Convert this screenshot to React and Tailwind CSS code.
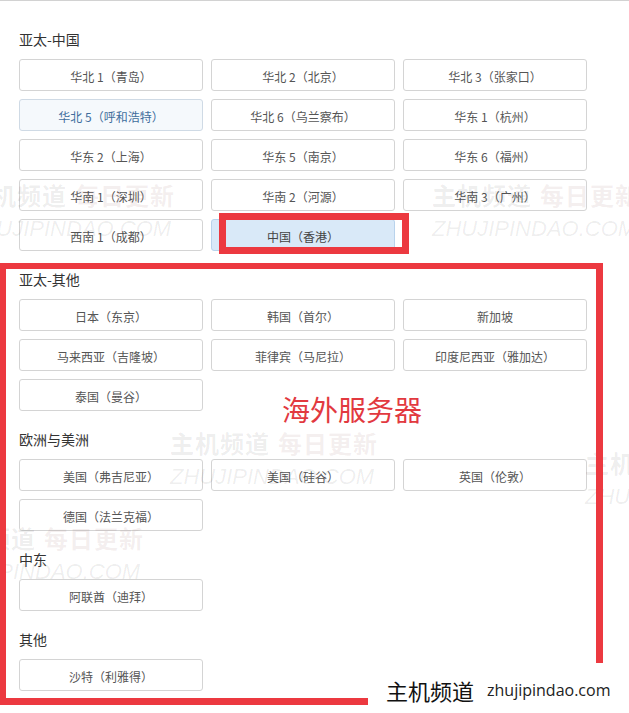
const sections = [
  {
    title: "亚太-中国",
    items: [
      "华北 1（青岛）",
      "华北 2（北京）",
      "华北 3（张家口）",
      "华北 5（呼和浩特）",
      "华北 6（乌兰察布）",
      "华东 1（杭州）",
      "华东 2（上海）",
      "华东 5（南京）",
      "华东 6（福州）",
      "华南 1（深圳）",
      "华南 2（河源）",
      "华南 3（广州）",
      "西南 1（成都）",
      "中国（香港）",
    ],
  },
  {
    title: "亚太-其他",
    items: ["日本（东京）", "韩国（首尔）", "新加坡", "马来西亚（吉隆坡）", "菲律宾（马尼拉）", "印度尼西亚（雅加达）", "泰国（曼谷）"],
  },
  { title: "欧洲与美洲", items: ["美国（弗吉尼亚）", "美国（硅谷）", "英国（伦敦）", "德国（法兰克福）"] },
  { title: "中东", items: ["阿联酋（迪拜）"] },
  { title: "其他", items: ["沙特（利雅得）"] },
];

const hovered = "华北 5（呼和浩特）";
const selected = "中国（香港）";

function RegionButton({ label }) {
  let cls = "border-[#d4d4d4] bg-white text-[#555]";
  if (label === hovered) cls = "border-[#cfdae5] bg-[#f5f9fc] text-[#3f6e9c]";
  if (label === selected) cls = "border-[#b9d3ec] bg-[#d9e9f8] text-[#444]";
  return (
    <button className={`h-[32px] rounded-[3px] border text-[12px] leading-none pt-[3px] ${cls}`}>
      {label}
    </button>
  );
}

// faint site watermark stamped over the page
function Watermark({ left, top }) {
  return (
    <div className="absolute pointer-events-none select-none whitespace-nowrap" style={{ left, top }}>
      <div className="text-[24px] leading-[30px] font-bold tracking-[1px]">
        <span className="text-black/[0.08]">主机频道</span>
        <span className="ml-[8px] text-[#905858]/[0.10]">每日更新</span>
      </div>
      <div className="mt-[4px] text-[22px] leading-[30px] italic font-['Liberation_Sans',sans-serif] text-black/[0.07]">
        ZHUJIPINDAO.COM
      </div>
    </div>
  );
}

export default function App() {
  return (
    <div className="relative w-[629px] h-[713px] overflow-hidden bg-white border-t border-[#d2d2d2] font-['Noto_Sans_CJK_SC','Noto_Sans',sans-serif]">
      <div className="pl-[19px] pt-[28px]">
        {sections.map((s, i) => (
          <div key={s.title} className={i > 0 ? "mt-[18px]" : ""}>
            <h3 className="text-[14px] leading-[20px] text-[#333] mb-[10px]">{s.title}</h3>
            <div className="grid grid-cols-[184px_184px_184px] gap-x-[8px] gap-y-[8px]">
              {s.items.map((it) => (
                <RegionButton key={it} label={it} />
              ))}
            </div>
          </div>
        ))}
      </div>

      <Watermark left={-33} top={179} />
      <Watermark left={432} top={179} />
      <Watermark left={170} top={427} />
      <Watermark left={-64} top={522} />
      <Watermark left={585} top={447} />

      {/* annotation boxes */}
      <div className="absolute left-[219px] top-[212px] w-[190px] h-[41px] border-[7px] border-[#ec3940]" />
      <div className="absolute left-0 top-[262px] w-[603px] h-[6px] bg-[#ec3940]" />
      <div className="absolute left-0 top-[262px] w-[6px] h-[442px] bg-[#ec3940]" />
      <div className="absolute left-[596px] top-[262px] w-[7px] h-[400px] bg-[#ec3940]" />
      <div className="absolute left-0 top-[697px] w-[368px] h-[7px] bg-[#ec3940]" />

      <div className="absolute left-[282px] top-[389px] text-[28px] leading-[38px] text-[#e2393f]">海外服务器</div>

      <div className="absolute left-[386px] top-[674px] flex items-center gap-[13px] whitespace-nowrap">
        <span className="text-[22px] leading-[30px] text-[#111]">主机频道</span>
        <span className="text-[16px] leading-[30px] text-[#222] font-['Open_Sans',sans-serif]">zhujipindao.com</span>
      </div>
    </div>
  );
}
